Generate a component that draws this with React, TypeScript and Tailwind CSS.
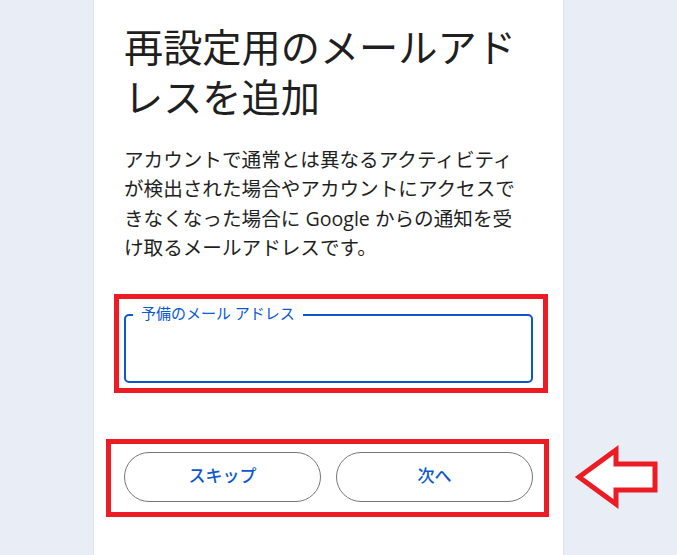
export default function App() {
  return (
    <div
      className="relative min-h-screen overflow-hidden bg-[#e9eef6]"
      style={{ fontFamily: 'Roboto, "Noto Sans CJK JP", sans-serif' }}
    >
      <div className="ml-[93px] min-h-[555px] w-[471px] border-x border-[#dde2ea] bg-white px-[30px] pt-[24px]">
        <h1 className="text-[39.2px] font-normal leading-[50px] text-[#1f1f1f]">
          再設定用のメールアドレスを追加
        </h1>

        <p
          className="mt-[21px] text-[19.6px] leading-[29.3px] text-[#1f1f1f]"
          style={{ fontFamily: '"Open Sans", "Noto Sans CJK JP", sans-serif' }}
        >
          アカウントで通常とは異なるアクティビティ
          <br />
          が検出された場合やアカウントにアクセスで
          <br />
          きなくなった場合に Google からの通知を受
          <br />
          け取るメールアドレスです。
        </p>

        <div className="relative mt-[52px] h-[69px] rounded-[5px] border-2 border-[#0b57d0]">
          <span className="absolute -top-[12px] left-[7px] bg-white px-[8px] text-[15px] leading-[20px] text-[#0b57d0]">
            予備のメール アドレス
          </span>
        </div>

        <div className="mt-[69px] flex gap-[15px]">
          <button className="h-[50px] flex-1 rounded-full border border-[#747775] bg-white text-[17px] font-medium text-[#0b57d0]">
            スキップ
          </button>
          <button className="h-[50px] flex-1 rounded-full border border-[#747775] bg-white text-[17px] font-medium text-[#0b57d0]">
            次へ
          </button>
        </div>
      </div>

      {/* annotation overlays */}
      <div className="pointer-events-none absolute left-[114px] top-[294px] h-[99px] w-[434px] border-[5px] border-[#ed1c24]" />
      <div className="pointer-events-none absolute left-[106px] top-[439px] h-[78px] w-[443px] border-[5px] border-[#ed1c24]" />
      <svg
        className="pointer-events-none absolute left-0 top-0"
        width="677"
        height="555"
        viewBox="0 0 677 555"
      >
        <path
          d="M579 477 L616 450 L616 464 L655 464 L655 490 L616 490 L616 504 Z"
          fill="#ffffff"
          stroke="#ed1c24"
          strokeWidth="5"
          strokeLinejoin="miter"
        />
      </svg>
    </div>
  );
}
